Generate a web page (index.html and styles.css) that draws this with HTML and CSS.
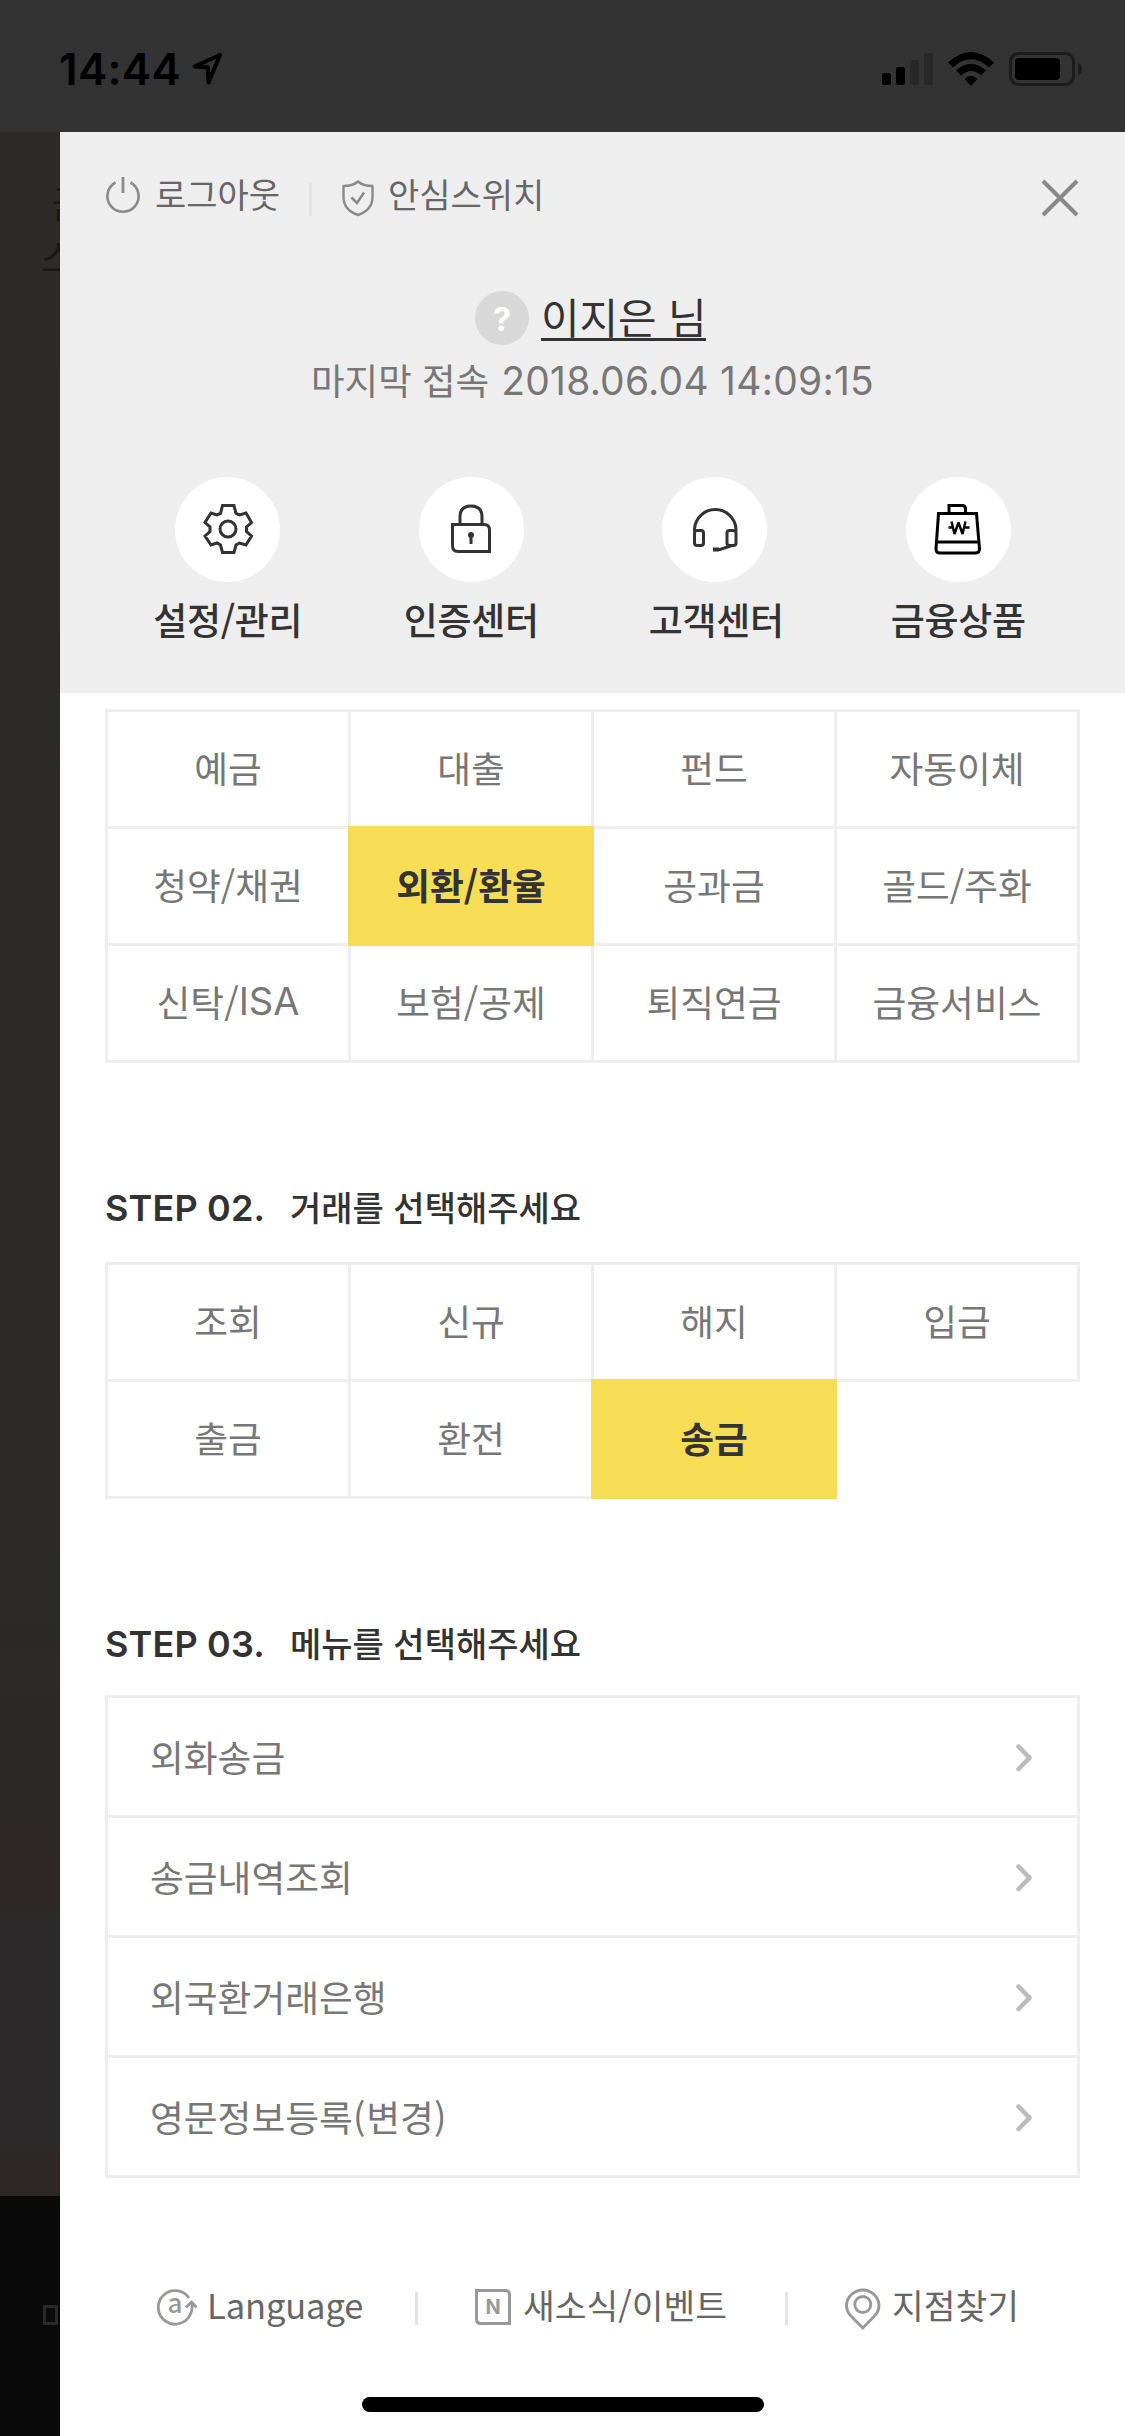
FILE: index.html
```html
<!DOCTYPE html>
<html lang="ko">
<head>
<meta charset="utf-8">
<title>전체메뉴</title>
<link rel="stylesheet" href="styles.css">
</head>
<body>
<div class="screen">
  <header class="status">
    <span class="time">14:44</span>
    <svg class="loc" width="32" height="36" viewBox="0 0 32 36"><path d="M2.500 15.500 L28 4 L16.500 31.500 L16 16.500 Z" fill="none" stroke="#000" stroke-width="4" stroke-linejoin="round"/></svg>
    <svg class="signal" width="59" height="34" viewBox="0 0 59 34"><rect x="0" y="20" width="9" height="12" rx="2.500"/><rect x="14" y="14" width="9" height="18" rx="2.500"/><rect x="28" y="7" width="9" height="25" rx="2.500" fill="#282828"/><rect x="42" y="0" width="9" height="32" rx="2.500" fill="#282828"/></svg>
    <svg class="wifi" width="46" height="34" viewBox="0 0 46 34"><path d="M0 10.500 Q23 -10.500 46 10.500 L41 15.500 Q23 -1 5 15.500 Z"/><path d="M8 18.500 Q23 5 38 18.500 L33 23.500 Q23 14.500 13 23.500 Z"/><path d="M16.500 27 Q23 20.500 29.500 27 L23 34 Z"/></svg>
    <svg class="battery" width="74" height="35" viewBox="0 0 74 35"><rect x="1.500" y="1.500" width="63" height="31" rx="8" fill="none" stroke="#1c1c1c" stroke-width="3"/><rect x="6" y="6" width="45" height="22" rx="4"/><path d="M69 11 Q73 13 73 17.500 Q73 22 69 23 Z" fill="#1c1c1c"/></svg>
  </header>
  <div class="body">
    <aside class="behind">
      <div class="behind-top"><span class="b1">금</span><span class="b2">스</span></div>
      <div class="behind-mid"></div>
      <div class="behind-low"></div>
      <div class="behind-bar"><i></i></div>
    </aside>
    <main class="panel">
      <section class="head">
        <nav class="top">
          <svg class="power" width="34" height="37" viewBox="0 0 34 37"><path d="M9.500 5.500A15.600 15.600 0 1 0 24.500 5.500" fill="none" stroke="#8a8a8a" stroke-width="2.600"/><path d="M17 0V16" stroke="#8a8a8a" stroke-width="2.800"/></svg>
          <span class="t-logout">로그아웃</span>
          <i class="bar"></i>
          <svg class="shield" width="32" height="37" viewBox="0 0 32 37"><path d="M16 1.500 Q11 6 1.500 6 V17 Q1.500 30 16 35 Q30.500 30 30.500 17 V6 Q21 6 16 1.500 Z" fill="none" stroke="#8a8a8a" stroke-width="2.400" stroke-linejoin="round"/><path d="M9.500 17.500 L15 23 L22 12.500" fill="none" stroke="#8a8a8a" stroke-width="2.600"/></svg>
          <span class="t-safe">안심스위치</span>
          <svg class="close" width="36" height="36" viewBox="0 0 36 36"><path d="M1 1L35 35M35 1L1 35" stroke="#888" stroke-width="4"/></svg>
        </nav>
        <div class="user"><span class="q">?</span><span class="name">이지은 님</span></div>
        <div class="last"><span class="last-label">마지막 접속</span><span class="date">2018.06.04 14:09:15</span></div>
        <div class="quick">
          <div class="qi"><div class="circle"><svg width="50" height="50" viewBox="0 0 50 50" fill="none" stroke="#333" stroke-width="3"><path d="M19.500 1.500H31L33 9.500L36.500 11L43 9L48.500 18.500L43.500 23V27.500L48.500 32L43 41L36.500 39L33 41L31 48.500H19.500L17.500 41L14 39L8 41L2 32L7 27.500V23L2 18.500L8 9L14 11L17.500 9.500Z"/><circle cx="25" cy="25" r="8"/></svg></div><span>설정/관리</span></div>
          <div class="qi"><div class="circle"><svg width="50" height="50" viewBox="0 0 50 50" fill="none" stroke="#333" stroke-width="3"><path d="M6.500 20.500H38Q43.500 20.500 43.500 26V47.500H12Q6.500 47.500 6.500 42Z"/><path d="M14 20V13Q14 2 25 2Q36 2 36 13V20"/><circle cx="25" cy="31" r="3" fill="#333" stroke="none"/><path d="M25 31V40"/></svg></div><span>인증센터</span></div>
          <div class="qi"><div class="circle"><svg width="50" height="50" viewBox="0 0 50 50" fill="none" stroke="#333" stroke-width="3"><path d="M4.500 27V25A20.800 21 0 0 1 46 25V27"/><rect x="4.500" y="26.500" width="9" height="15" rx="2.500"/><rect x="37" y="26.500" width="9" height="15" rx="2.500"/><path d="M42 41.500L30 45.500H24"/><path d="M23 45.500H29" stroke-width="4"/></svg></div><span class="l3">고객센터</span></div>
          <div class="qi"><div class="circle"><svg width="50" height="52" viewBox="0 0 50 52" fill="none" stroke="#000" stroke-width="3"><path d="M5.500 10.500H43.500L46.500 46Q46.500 50 42 50H7Q3 50 3 46Z"/><path d="M4 39H46M16 10V2.500H29Q32.500 2.500 32.500 6V10"/><path d="M18.500 18.500L21.500 31L25.500 19.500L29.500 31L32.500 18.500M15.500 24.500H20.500M30.500 24.500H36.500" stroke-width="2.400" stroke-linejoin="bevel"/></svg></div><span>금융상품</span></div>
        </div>
      </section>
      <section class="content">
        <div class="grid g1">
          <div class="cell">예금</div><div class="cell">대출</div><div class="cell">펀드</div><div class="cell">자동이체</div>
          <div class="cell">청약/채권</div><div class="cell on">외환/환율</div><div class="cell">공과금</div><div class="cell">골드/주화</div>
          <div class="cell">신탁/<span class="lat">ISA</span></div><div class="cell">보험/공제</div><div class="cell">퇴직연금</div><div class="cell">금융서비스</div>
        </div>
        <h2 class="h-a"><b>STEP 02.</b><span>거래를 선택해주세요</span></h2>
        <div class="grid">
          <div class="cell">조회</div><div class="cell">신규</div><div class="cell">해지</div><div class="cell">입금</div>
          <div class="cell">출금</div><div class="cell">환전</div><div class="cell on">송금</div>
        </div>
        <h2 class="h-b"><b>STEP 03.</b><span>메뉴를 선택해주세요</span></h2>
        <ul class="list">
          <li><span>외화송금</span><svg width="16" height="28" viewBox="0 0 16 28"><path d="M2.500 2.500L13.500 13.800L2.500 25" fill="none" stroke="#bbb" stroke-width="4.500" stroke-linecap="round" stroke-linejoin="round"/></svg></li>
          <li><span>송금내역조회</span><svg width="16" height="28" viewBox="0 0 16 28"><path d="M2.500 2.500L13.500 13.800L2.500 25" fill="none" stroke="#bbb" stroke-width="4.500" stroke-linecap="round" stroke-linejoin="round"/></svg></li>
          <li><span>외국환거래은행</span><svg width="16" height="28" viewBox="0 0 16 28"><path d="M2.500 2.500L13.500 13.800L2.500 25" fill="none" stroke="#bbb" stroke-width="4.500" stroke-linecap="round" stroke-linejoin="round"/></svg></li>
          <li><span>영문정보등록<i class="paren">(</i>변경<i class="paren">)</i></span><svg width="16" height="28" viewBox="0 0 16 28"><path d="M2.500 2.500L13.500 13.800L2.500 25" fill="none" stroke="#bbb" stroke-width="4.500" stroke-linecap="round" stroke-linejoin="round"/></svg></li>
        </ul>
        <footer class="foot">
          <svg class="f1" width="40" height="38" viewBox="0 0 40 38"><path d="M32 10A16.800 16.800 0 1 0 33.500 26Q35.500 22 35 15" fill="none" stroke="#999" stroke-width="2.800"/><path d="M29 19.500L34.500 14L39.500 19.500" fill="none" stroke="#999" stroke-width="2.800"/><text x="18" y="25" text-anchor="middle" class="ico-a">a</text></svg>
          <span class="f-lang">Language</span>
          <i class="bar bar1"></i>
          <svg class="f2" width="36" height="36" viewBox="0 0 36 36"><path d="M1.500 1.500H30Q34.500 1.500 34.500 6V34.500H6Q1.500 34.500 1.500 30Z" fill="none" stroke="#999" stroke-width="3"/><text x="18" y="25" text-anchor="middle" class="ico-n">N</text></svg>
          <span class="f-news">새소식/이벤트</span>
          <i class="bar bar2"></i>
          <svg class="f3" width="36" height="43" viewBox="0 0 36 43"><path d="M6.500 29.500Q1.500 25 1.500 18A16.300 16.300 0 0 1 34 18Q34 25 29 29.500L17.800 41Z" fill="none" stroke="#999" stroke-width="2.900"/><circle cx="17.800" cy="17.500" r="8" fill="none" stroke="#999" stroke-width="2.900"/></svg>
          <span class="f-find">지점찾기</span>
        </footer>
        <div class="home"></div>
      </section>
    </main>
  </div>
</div>
</body>
</html>
```
FILE: styles.css
```css
* { box-sizing: border-box; }
body { margin: 0; font-family: "Noto Sans CJK KR", sans-serif; }
svg { display: block; flex: none; overflow: visible; }
span { white-space: nowrap; }
.screen { width: 1125px; height: 2436px; overflow: hidden; background: #333; display: flex; flex-direction: column; }
.status { height: 132px; flex: none; display: flex; align-items: flex-start; padding-left: 59px; }
.time { font: 600 44px/56px Inter, sans-serif; margin-top: 41px; width: 133px; letter-spacing: 0.300px; }
.loc { margin-top: 51px; }
.signal { margin: 53px 0 0 658px; }
.wifi { margin: 52px 0 0 7px; }
.battery { margin: 52px 0 0 15px; }
.body { display: flex; flex: 1; }
.behind { width: 60px; flex: none; overflow: hidden; display: flex; flex-direction: column; color: #191816; }
.behind-top { height: 1779px; flex: none; background: linear-gradient(#2d2b28, #2b2a29 80%, #2e2728); display: flex; flex-direction: column; font-size: 38px; line-height: 56px; }
.b1 { margin: 42px 0 0 51px; }
.b2 { margin: -2px 0 0 41px; }
.behind-mid { height: 240px; flex: none; background: #2c2a2b; }
.behind-low { height: 45px; flex: none; background: #2d2727; }
.behind-bar { flex: 1; background: #0a0a0a; padding: 109px 0 0 43px; }
.behind-bar i { display: block; width: 15px; height: 20px; border: 3px solid #292929; }
.panel { width: 1065px; background: #fff; display: flex; flex-direction: column; }
.head { height: 561px; flex: none; background: #eee; }
.top { display: flex; align-items: flex-start; padding: 45px 0 0 46px; color: #666; font-size: 34px; line-height: 54px; height: 135px; }
.top span { margin-top: -10px; }
.t-logout { margin-left: 15px; width: 127px; }
.bar { width: 3px; height: 33px; background: #e4e4e4; flex: none; }
.top .bar { margin: 6px 0 0 27px; }
.shield { margin: 3px 0 0 30px; }
.t-safe { margin-left: 14px; }
.close { margin: 3px 47px 0 auto; }
.user { display: flex; height: 54px; align-items: center; padding-left: 415px; margin-top: 24px; }
.q { width: 54px; height: 54px; border-radius: 50%; background: #d8d8d8; color: #fff; font: 700 33px/56px Inter, sans-serif; text-align: center; }
.name { margin: -2px 0 0 12px; font-size: 42px; line-height: 44px; color: #333; letter-spacing: -0.2px; border-bottom: 3px solid #333; height: 47px; }
.last { display: flex; padding-left: 251px; margin-top: 8px; line-height: 56px; height: 56px; color: #777; }
.last-label { font-size: 36.500px; margin-top: -1px; }
.date { font-family: Inter, sans-serif; font-size: 39px; margin-left: 12px; letter-spacing: 0.250px; }
.quick { display: grid; grid-template-columns: repeat(4, 243.500px); padding-left: 46px; margin-top: 68px; }
.qi { display: flex; flex-direction: column; align-items: center; font-size: 37px; line-height: 58px; font-weight: 500; color: #333; letter-spacing: -0.300px; }
.circle { width: 105px; height: 105px; border-radius: 50%; background: #fff; display: flex; align-items: center; justify-content: center; padding-bottom: 1px; }
.qi span { margin-top: 8px; }
.qi .l3 { padding-left: 3px; }
.content { padding: 16px 45px 0; flex: 1; display: flex; flex-direction: column; }
.grid { display: grid; grid-template-columns: repeat(4, 243px); grid-auto-rows: 117px; padding-bottom: 3px; flex: none; }
.cell { width: 246px; height: 120px; border: 3px solid #eee; display: flex; align-items: center; justify-content: center; font-size: 36.750px; line-height: 56px; color: #777; padding-bottom: 4px; }
.on { background: #f7dc55; border-color: #f7dc55; color: #333; font-weight: 700; position: relative; }
.lat { font-family: Inter, sans-serif; font-size: 38px; }
h2 { margin: 0; display: flex; align-items: flex-start; font-size: 34px; font-weight: 500; line-height: 54px; color: #333; }
h2 b { font: 600 36px/54px Inter, sans-serif; width: 185px; letter-spacing: 0.150px; margin-top: -1px; }
h2 span { margin-top: -2px; }
.h-a { margin-top: 119px; height: 80px; }
.h-b { margin-top: 119px; height: 77px; }
.list { list-style: none; margin: 0; padding: 0; border: 3px solid #eee; border-bottom: 0; flex: none; }
.list li { height: 120px; border-bottom: 3px solid #eee; display: flex; align-items: center; justify-content: space-between; padding: 0 45px 0 42px; font-size: 36.750px; line-height: 56px; color: #777; }
.list span { margin-top: -2px; }
.list svg { margin-top: 2px; }
.paren { font-style: normal; letter-spacing: 1px; }
.foot { display: flex; align-items: flex-start; height: 110px; margin-top: 109px; padding-left: 52px; font-size: 34.500px; line-height: 54px; color: #666; flex: none; }
.f1 { margin-top: 1px; }
.foot span { margin-top: -10px; }
.f-lang { margin-left: 10px; width: 208px; letter-spacing: -0.100px; }
.foot .bar { margin-top: 5px; }
.f2 { margin: 2px 12px 0 57px; }
.f-news { width: 262px; }
.f3 { margin: 0 11px 0 57px; }
.ico-a { font: 500 26px "Noto Sans CJK KR", sans-serif; fill: #999; }
.ico-n { font: 700 20px Inter, sans-serif; fill: #999; }
.home { width: 402px; height: 15px; border-radius: 8px; background: #000; margin-left: 257px; flex: none; }
```
